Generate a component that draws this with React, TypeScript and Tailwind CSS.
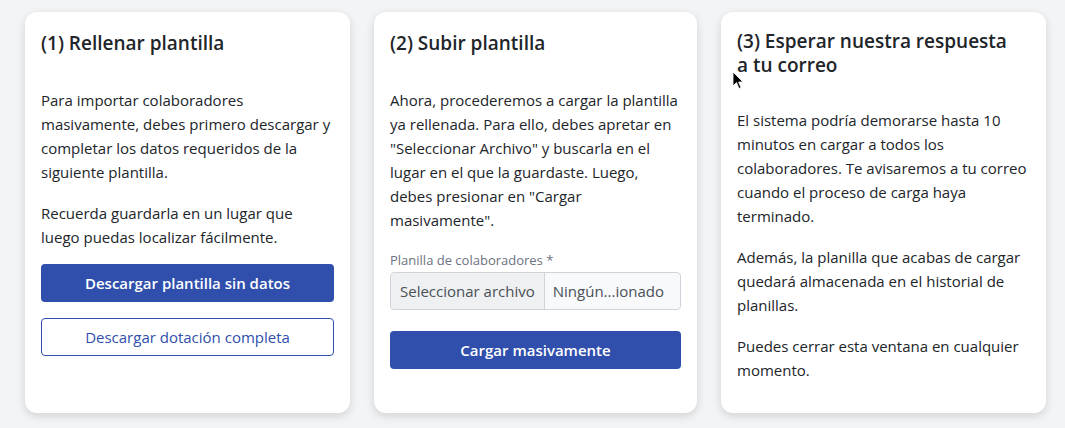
import React from 'react';

const font = { fontFamily: '"Open Sans", "Noto Sans", sans-serif' };

const Card: React.FC<{ title: React.ReactNode; titleClass?: string; children: React.ReactNode }> = ({
  title,
  titleClass = 'mb-[33px]',
  children,
}) => (
  <div className="bg-white rounded-xl shadow-[0_3px_10px_rgba(0,0,0,0.14)] px-4 pt-[19px] pb-4 flex flex-col">
    <h2 className={`text-[19px] leading-6 font-semibold text-[#212529] ${titleClass}`}>{title}</h2>
    {children}
  </div>
);

export default function App() {
  return (
    <div style={font} className="relative w-[1065px] h-[428px] bg-[#f3f4f6] pl-[25px] pr-[18px] pt-3 text-[#212529]">
      <div className="grid grid-cols-[325px_323px_325px] gap-6 h-[401px]">
        <Card title="(1) Rellenar plantilla">
          <div className="text-[15px] leading-6 space-y-[17px]">
            <p>Para importar colaboradores masivamente, debes primero descargar y completar los datos requeridos de la siguiente plantilla.</p>
            <p>Recuerda guardarla en un lugar que luego puedas localizar fácilmente.</p>
          </div>
          <button className="mt-[15px] h-[38px] w-full rounded bg-[#304fac] text-white text-[15px] font-semibold">
            Descargar plantilla sin datos
          </button>
          <button className="mt-[16px] h-[38px] w-full rounded border border-[#304fac] bg-white text-[#304fac] text-[15px]">
            Descargar dotación completa
          </button>
        </Card>

        <Card title="(2) Subir plantilla">
          <p className="text-[15px] leading-6">
            Ahora, procederemos a cargar la plantilla ya rellenada. Para ello, debes apretar en "Seleccionar Archivo" y buscarla en el lugar en el que la guardaste. Luego, debes presionar en "Cargar masivamente".
          </p>
          <label className="mt-[18px] text-[13px] leading-5 text-[#6b7280]">Planilla de colaboradores *</label>
          <div className="mt-[2px] h-[38px] flex items-stretch rounded border border-[#cfd4da] bg-[#f8f9fa] text-[15px] text-[#495057]">
            <span className="flex items-center px-[9px] bg-[#eef0f2] border-r border-[#cfd4da] rounded-l whitespace-nowrap">
              Seleccionar archivo
            </span>
            <span className="flex items-center px-2 whitespace-nowrap">Ningún...ionado</span>
          </div>
          <button className="mt-[21px] h-[38px] w-full rounded bg-[#304fac] text-white text-[15px] font-semibold">
            Cargar masivamente
          </button>
        </Card>

        <Card title={<>(3) Esperar nuestra respuesta<br />a tu correo</>} titleClass="-mt-[2px] mb-[31px]">
          <div className="text-[15px] leading-6 space-y-[17px]">
            <p>El sistema podría demorarse hasta 10 minutos en cargar a todos los colaboradores. Te avisaremos a tu correo cuando el proceso de carga haya terminado.</p>
            <p>Además, la planilla que acabas de cargar quedará almacenada en el historial de planillas.</p>
            <p>Puedes cerrar esta ventana en cualquier momento.</p>
          </div>
        </Card>
      </div>

      <svg className="absolute left-[732px] top-[71px]" width="12" height="19" viewBox="0 0 12 19">
        <path d="M1 1 L1 15 L4.5 11.5 L7 17.5 L9 16.6 L6.6 11 L11 11 Z" fill="#000" stroke="#fff" strokeWidth="0.8" />
      </svg>
    </div>
  );
}
